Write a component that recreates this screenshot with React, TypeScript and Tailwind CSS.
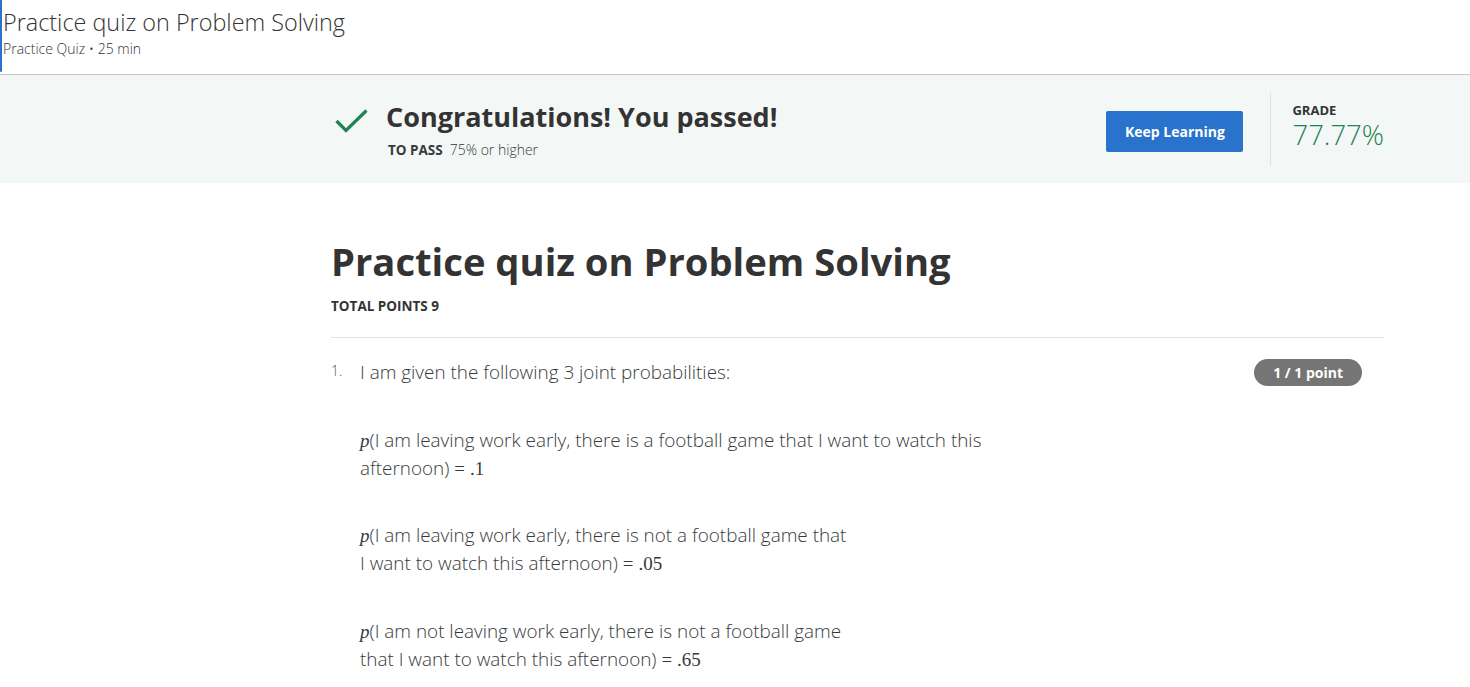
import React from 'react';

const font = { fontFamily: '"Open Sans", "Noto Sans", sans-serif' };

// KaTeX-like math bits
const M = ({ children }: { children: React.ReactNode }) => (
  <span className="font-['Liberation_Serif',serif] text-[19px] leading-none">{children}</span>
);
const P = () => <span className="font-['Liberation_Serif',serif] italic text-[19px] leading-none">p</span>;

const Check = () => (
  <svg width="33" height="24" viewBox="0 0 33 24" fill="none">
    <path d="M1.5 12 L11 21.5 L31.5 1.5" stroke="#1f8354" strokeWidth="3.2" />
  </svg>
);

export default function App() {
  return (
    <div className="min-h-screen bg-white text-[#373a3c]" style={font}>
      {/* top header */}
      <header className="relative h-[75px] border-b border-[#c8c8c8] pl-[3px] pt-[6px]">
        <div className="absolute left-0 top-0 h-[72px] w-[2px] rounded-b bg-[#2a73cc]" />
        <h2 className="text-[23.4px] font-light leading-[32px] text-[#333]">Practice quiz on Problem Solving</h2>
        <p className="mt-[2px] text-[14px] font-light leading-[18px] text-[#333]">Practice Quiz • 25 min</p>
      </header>

      {/* result banner */}
      <section className="h-[108px] bg-[#f3f8f6]">
        <div className="ml-[331px] flex w-[1053px] items-start">
          <div className="flex flex-1 items-start pt-[19px]">
            <div className="ml-[4px] mt-[15px]">
              <Check />
            </div>
            <div className="ml-[18px]">
              <h3 className="text-[27px] font-bold leading-[46px] text-[#333]">Congratulations! You passed!</h3>
              <p className="ml-[2px] text-[14px] leading-[20px]">
                <span className="text-[13.5px] font-bold">TO PASS</span>
                <span className="ml-[7px] font-light">75% or higher</span>
              </p>
            </div>
          </div>
          <button className="mt-[36px] h-[41px] w-[137px] rounded-[2px] bg-[#2a73cc] text-[14px] font-bold text-white">
            Keep Learning
          </button>
          <div className="ml-[27px] mt-[17px] h-[74px] border-l border-[#dfe3e2]" />
          <div className="ml-[21px] pt-[27px]">
            <div className="text-[13px] font-bold leading-[16px] text-[#333]">GRADE</div>
            <div className="mt-[1px] text-[27.5px] font-light leading-[32px] text-[#1f8354]">77.77%</div>
          </div>
        </div>
      </section>

      {/* quiz body */}
      <main className="ml-[331px] w-[1053px] pt-[51px]">
        <h1 className="text-[38.2px] font-bold leading-[54px] text-[#333]">Practice quiz on Problem Solving</h1>
        <p className="mt-[9px] text-[13.5px] font-bold leading-[18px] text-[#333]">TOTAL POINTS 9</p>
        <hr className="mt-[22px] border-t border-[#e1e1e1]" />

        <div className="mt-[20px] flex">
          <span className="w-[29px] pt-[1px] text-[14px] font-light leading-[24px] text-[#555]">1.</span>
          <div className="flex-1 text-[18.9px] font-light leading-[28px] text-[#373a3c]">
            <div className="flex items-start justify-between">
              <p>I am given the following 3 joint probabilities:</p>
              <span className="mr-[22px] mt-[1px] rounded-full bg-[#757575] px-[19px] text-[14px] font-bold leading-[27px] text-white">
                1 / 1 point
              </span>
            </div>
            <p className="mt-[40px]">
              <P />(I am leaving work early, there is a football game that I want to watch this
              <br />
              afternoon) = <M>.1</M>
            </p>
            <p className="mt-[39px]">
              <P />(I am leaving work early, there is not a football game that
              <br />I want to watch this afternoon) = <M>.05</M>
            </p>
            <p className="mt-[40px]">
              <P />(I am not leaving work early, there is not a football game
              <br />
              that I want to watch this afternoon) = <M>.65</M>
            </p>
          </div>
        </div>
      </main>
    </div>
  );
}
